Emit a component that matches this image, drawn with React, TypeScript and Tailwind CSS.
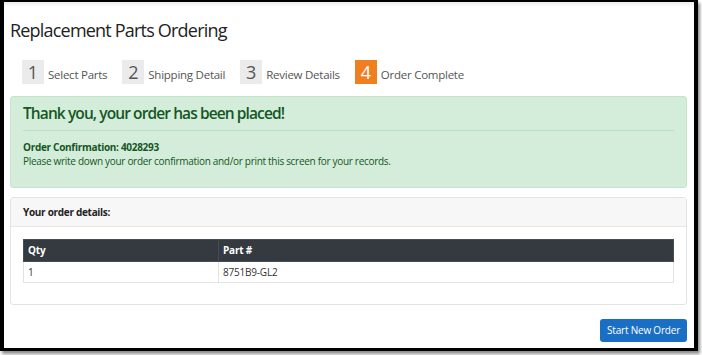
const steps = [
  { n: 1, label: "Select Parts" },
  { n: 2, label: "Shipping Detail" },
  { n: 3, label: "Review Details" },
  { n: 4, label: "Order Complete", active: true },
];

export default function App() {
  return (
    <div className="w-[702px] h-[355px] bg-white" style={{ fontFamily: "'Open Sans', 'Noto Sans', sans-serif" }}>
      <div className="w-[698px] h-[351px] border-l-4 border-t-2 border-r-4 border-b-[3px] border-black shadow-[2px_3px_3px_rgba(0,0,0,0.45)] bg-white">
        <div className="h-full bg-gradient-to-b from-[#ececec] via-white to-white bg-[length:100%_10px] bg-no-repeat px-[6px] pr-[7px]">
          <h1 className="pt-[15px] text-[18px] leading-[26px] text-[#222] tracking-[-0.8px]">Replacement Parts Ordering</h1>

          <div className="flex items-center mt-[17px] pl-[12px] h-[24px]">
            {steps.map((s) => (
              <div key={s.n} className="flex items-center mr-[15px]">
                <div
                  className={`w-[22px] h-[24px] flex items-center justify-center text-[18px] leading-none ${
                    s.active ? "bg-[#f07f1f] text-white" : "bg-[#ebebeb] text-[#555]"
                  }`}
                >
                  {s.n}
                </div>
                <span className="ml-[4px] mt-[6px] text-[11.5px] text-[#555] tracking-[-0.25px]">{s.label}</span>
              </div>
            ))}
          </div>

          <div className="mt-[12px] h-[92px] bg-[#d4edda] border border-[#c3e6cb] rounded-[3px] px-[12px] text-[#155724]">
            <div className="pt-[5px] text-[15.5px] leading-[22px] font-semibold tracking-[-0.9px]">Thank you, your order has been placed!</div>
            <div className="mt-[6px] border-t border-[#b9dec3]" />
            <div className="mt-[9px] text-[10px] leading-[14px] font-bold tracking-[-0.3px]">Order Confirmation: 4028293</div>
            <div className="text-[10px] leading-[14px] tracking-[-0.3px]">Please write down your order confirmation and/or print this screen for your records.</div>
          </div>

          <div className="mt-[9px] h-[108px] border border-[#e3e3e3] rounded-[3px]">
            <div className="h-[29px] bg-[#f7f7f7] border-b border-[#e6e6e6] px-[12px] flex items-center text-[10px] font-bold text-[#222] tracking-[-0.3px]">
              Your order details:
            </div>
            <div className="px-[12px] pt-[12px]">
              <table className="w-full border-collapse text-[10px] tracking-[-0.2px]">
                <thead>
                  <tr className="bg-[#343a40] text-white h-[22px]">
                    <th className="text-left font-bold pl-[4px] w-[195px] border border-[#454d55]">Qty</th>
                    <th className="text-left font-bold pl-[4px] border border-[#454d55]">Part #</th>
                  </tr>
                </thead>
                <tbody>
                  <tr className="h-[21px] text-[#333]">
                    <td className="pl-[4px] border border-[#e3e3e3]">1</td>
                    <td className="pl-[4px] border border-[#e3e3e3]">8751B9-GL2</td>
                  </tr>
                </tbody>
              </table>
            </div>
          </div>

          <div className="flex justify-end mt-[14px]">
            <button className="h-[23px] w-[87px] bg-[#1a6fc4] rounded-[3px] text-white text-[10px] tracking-[-0.2px]">Start New Order</button>
          </div>
        </div>
      </div>
    </div>
  );
}
